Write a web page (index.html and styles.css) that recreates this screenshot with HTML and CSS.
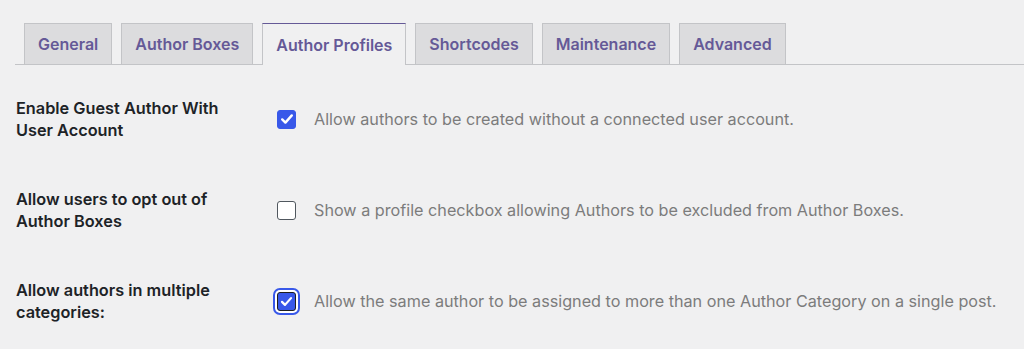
FILE: index.html
```html
<!DOCTYPE html>
<html>
<head>
    <meta charset="utf-8" />
    <meta name="viewport" content="width=device-width, initial-scale=1.0">
    <title>Author Profiles</title>
    <link rel="stylesheet" href="styles.css">
</head>
<body>
    <div class="nav-tabs">
        <a class="nav-tab">General</a>
        <a class="nav-tab">Author Boxes</a>
        <a class="nav-tab nav-tab-active">Author Profiles</a>
        <a class="nav-tab">Shortcodes</a>
        <a class="nav-tab">Maintenance</a>
        <a class="nav-tab">Advanced</a>
    </div>

    <div class="form-table">
        <div class="form-row">
            <div class="form-label">Enable Guest Author With User Account</div>
            <div class="form-field">
                <span class="checkbox checked">
                    <svg viewBox="0 0 20 20" width="16" height="16"><path d="M4 10.5l4 4 8-9" fill="none" stroke="#fff" stroke-width="3" stroke-linecap="round" stroke-linejoin="round"/></svg>
                </span>
                <span class="description">Allow authors to be created without a connected user account.</span>
            </div>
        </div>
        <div class="form-row">
            <div class="form-label">Allow users to opt out of Author Boxes</div>
            <div class="form-field">
                <span class="checkbox"></span>
                <span class="description">Show a profile checkbox allowing Authors to be excluded from Author Boxes.</span>
            </div>
        </div>
        <div class="form-row">
            <div class="form-label">Allow authors in multiple categories:</div>
            <div class="form-field">
                <span class="checkbox checked focused">
                    <svg viewBox="0 0 20 20" width="15" height="15"><path d="M4 10.5l4 4 8-9" fill="none" stroke="#fff" stroke-width="3" stroke-linecap="round" stroke-linejoin="round"/></svg>
                </span>
                <span class="description">Allow the same author to be assigned to more than one Author Category on a single post.</span>
            </div>
        </div>
    </div>
</body>
</html>
```

FILE: styles.css
```css
body {
    margin: 0;
    padding: 0;
    background-color: #f0f0f1;
    font-family: Inter, "Noto Sans", "Liberation Sans", sans-serif;
    color: #1d2327;
}
.nav-tabs {
    display: flex;
    gap: 9px;
    margin: 23px 0 0 15px;
    padding-left: 9px;
    border-bottom: 1px solid #c3c4c7;
}
.nav-tab {
    display: flex;
    align-items: center;
    height: 40px;
    padding: 0 13px;
    margin-bottom: -1px;
    background-color: #dcdcde;
    border: 1px solid #c3c4c7;
    border-bottom: none;
    color: #655997;
    font-size: 16px;
    font-weight: 600;
    cursor: pointer;
}
.nav-tab-active {
    background-color: #f0f0f1;
    border-top-color: #655997;
    height: 41px;
    color: #655997;
}
.form-table {
    margin-top: 9px;
}
.form-row {
    display: flex;
    align-items: center;
    padding: 23px 0 24px 16px;
}
.form-label {
    width: 238px;
    font-size: 16.3px;
    font-weight: 600;
    line-height: 22px;
}
.form-field {
    display: flex;
    align-items: center;
    margin-left: 23px;
}
.checkbox {
    box-sizing: border-box;
    width: 19px;
    height: 19px;
    border: 1px solid #50575e;
    border-radius: 3px;
    background-color: #fff;
    display: flex;
    align-items: center;
    justify-content: center;
}
.checkbox.checked {
    background-color: #3858e9;
    border-color: #3858e9;
}
.checkbox.focused {
    border: 1.5px solid #1e1e1e;
    box-shadow: 0 0 0 2px #fff, 0 0 0 4px #3858e9;
}
.description {
    margin-left: 18px;
    font-size: 16.2px;
    color: #7c7c7c;
}
```
